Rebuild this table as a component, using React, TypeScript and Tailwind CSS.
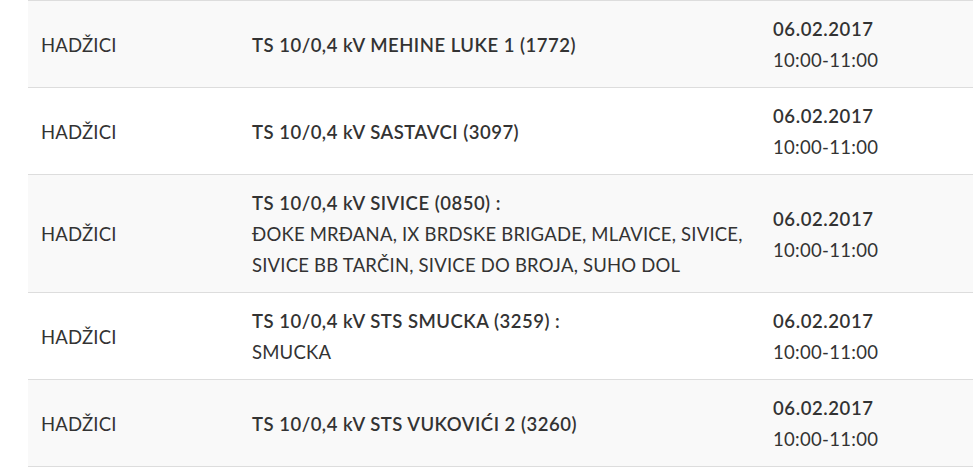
import React from "react";

type Outage = {
  id: number;
  place: string;
  station: string;
  streets?: string[];
  date: string;
  time: string;
};

const outages: Outage[] = [
  { id: 1, place: "HADŽICI", station: "TS 10/0,4 kV MEHINE LUKE 1 (1772)", date: "06.02.2017", time: "10:00-11:00" },
  { id: 2, place: "HADŽICI", station: "TS 10/0,4 kV SASTAVCI (3097)", date: "06.02.2017", time: "10:00-11:00" },
  {
    id: 3,
    place: "HADŽICI",
    station: "TS 10/0,4 kV SIVICE (0850) :",
    streets: ["ĐOKE MRĐANA, IX BRDSKE BRIGADE, MLAVICE, SIVICE,", "SIVICE BB TARČIN, SIVICE DO BROJA, SUHO DOL"],
    date: "06.02.2017",
    time: "10:00-11:00",
  },
  { id: 4, place: "HADŽICI", station: "TS 10/0,4 kV STS SMUCKA (3259) :", streets: ["SMUCKA"], date: "06.02.2017", time: "10:00-11:00" },
  { id: 5, place: "HADŽICI", station: "TS 10/0,4 kV STS VUKOVIĆI 2 (3260)", date: "06.02.2017", time: "10:00-11:00" },
];

const App = () => {
  return (
    <div className="min-h-[469px] bg-white pl-[28px] pr-[3px] font-['Lato','Liberation_Sans',sans-serif] text-[18.5px] leading-[31px] tracking-[0.2px] text-[#333]">
      <table className="w-[945px] table-fixed border-collapse">
        <colgroup>
          <col className="w-[212px]" />
          <col className="w-[521px]" />
          <col className="w-[212px]" />
        </colgroup>
        <tbody>
          {outages.map(({ id, place, station, streets, date, time }) => (
            <tr key={id} className="border-t border-b border-[#ddd] odd:bg-[#f9f9f9]">
              <td className="px-[13px] pt-[13px] pb-[11px] align-middle">{place}</td>
              <td className="px-[12px] pt-[13px] pb-[11px] align-middle">
                <div className="font-semibold tracking-[0.5px]">{station}</div>
                {streets?.map((s) => (
                  <div key={s}>{s}</div>
                ))}
              </td>
              <td className="px-[12px] pt-[13px] pb-[11px] align-middle">
                <div className="font-semibold tracking-[0.6px]">{date}</div>
                <div className="tracking-[0.3px]">{time}</div>
              </td>
            </tr>
          ))}
        </tbody>
      </table>
    </div>
  );
};

export default App;
